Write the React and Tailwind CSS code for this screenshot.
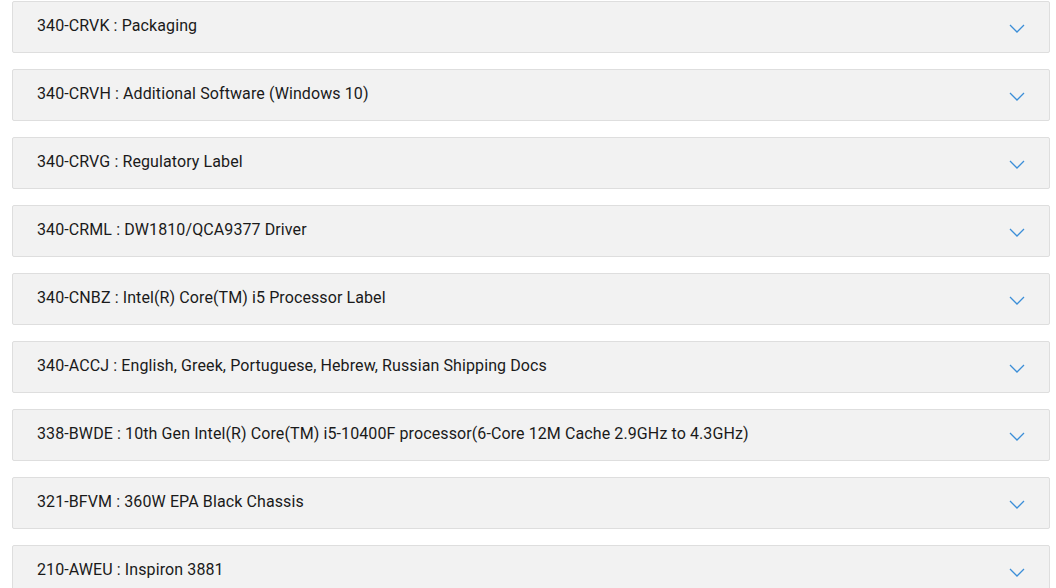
const items = [
  "340-CRVK : Packaging",
  "340-CRVH : Additional Software (Windows 10)",
  "340-CRVG : Regulatory Label",
  "340-CRML : DW1810/QCA9377 Driver",
  "340-CNBZ : Intel(R) Core(TM) i5 Processor Label",
  "340-ACCJ : English, Greek, Portuguese, Hebrew, Russian Shipping Docs",
  "338-BWDE : 10th Gen Intel(R) Core(TM) i5-10400F processor(6-Core 12M Cache 2.9GHz to 4.3GHz)",
  "321-BFVM : 360W EPA Black Chassis",
  "210-AWEU : Inspiron 3881",
];

const Chevron = () => (
  <svg width="16" height="9" viewBox="0 0 16 9" fill="none" className="mt-[3px]">
    <path d="M1 1l7 7 7-7" stroke="#3b8ed8" strokeWidth="1.3" />
  </svg>
);

export default function App() {
  return (
    <div
      className="bg-white h-[588px] overflow-hidden pt-px pl-3 pr-[6px]"
      style={{ fontFamily: "Roboto, 'Liberation Sans', sans-serif" }}
    >
      {items.map((item) => (
        <div
          key={item}
          className="h-[52px] mb-4 flex items-center justify-between bg-[#f2f2f2] border border-[#dedede] rounded-[2px] pl-6 pr-6"
        >
          <span className="text-[16px] tracking-[0.1px] text-[#1a1a1a] -mt-[2px]">
            {item}
          </span>
          <Chevron />
        </div>
      ))}
    </div>
  );
}
